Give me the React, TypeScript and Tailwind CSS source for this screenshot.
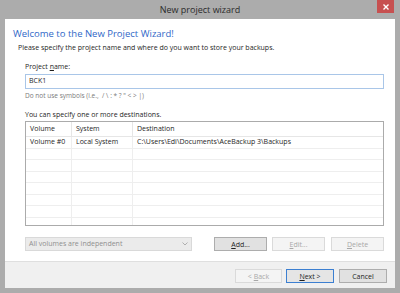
import React from "react";

const font = { fontFamily: '"Open Sans", "Noto Sans", sans-serif' };

function Btn({ label, u, rest, disabled, def }: { label?: string; u: string; rest: string; disabled?: boolean; def?: boolean }) {
  const base = "flex items-center justify-center h-[14px] text-[7px] leading-none border whitespace-pre";
  const cls = disabled
    ? "bg-[#f4f4f4] border-[#dadada] text-[#a8a8a8]"
    : def
    ? "bg-[#e5e5e5] border-[#3c7fd1] text-[#1e1e1e]"
    : "bg-[#e1e1e1] border-[#adadad] text-[#1e1e1e]";
  return (
    <div className={`${base} ${cls} w-full`}>
      <span>
        {label}
        <span className="underline">{u}</span>
        {rest}
      </span>
    </div>
  );
}

export default function App() {
  const rows = [
    ["Volume #0", "Local System", "C:\\Users\\Edi\\Documents\\AceBackup 3\\Backups"],
    ["", "", ""],
    ["", "", ""],
    ["", "", ""],
    ["", "", ""],
    ["", "", ""],
    ["", "", ""],
    ["", "", ""],
  ];
  return (
    <div className="w-[400px] h-[293px] bg-[#acacac] flex flex-col overflow-hidden" style={font}>
      <div className="relative h-[19px] flex items-center justify-center shrink-0">
        <span className="text-[9px] text-[#2b2b2b]">New project wizard</span>
        <div className="absolute right-[6px] top-0 w-[17px] h-[13px] bg-[#c75050] flex items-center justify-center">
          <svg width="6" height="6" viewBox="0 0 6 6">
            <path d="M0.5 0.5 L5.5 5.5 M5.5 0.5 L0.5 5.5" stroke="white" strokeWidth="1.4" />
          </svg>
        </div>
      </div>
      <div className="mx-[5px] flex-1 bg-white flex flex-col">
        <div className="flex-1 flex flex-col">
          <div className="mt-[8px] ml-[8px] h-[14px] leading-[14px] text-[9.5px] text-[#2f67c7]">
            Welcome to the New Project Wizard!
          </div>
          <div className="mt-[2px] ml-[13px] h-[10px] leading-[10px] text-[7px] text-[#1e1e1e]">
            Please specify the project name and where do you want to store your backups.
          </div>
          <div className="ml-[20px] mr-[11px] flex flex-col">
            <div className="mt-[9px] h-[10px] leading-[10px] text-[7px] text-[#1e1e1e]">
              Project <span className="underline">n</span>ame:
            </div>
            <div className="mt-[2px] h-[15px] border border-[#a9c6e8] flex items-center pl-[3px] text-[7px] text-[#1e1e1e]">
              BCK1
            </div>
            <div className="mt-[2px] h-[10px] leading-[10px] text-[6.5px] text-[#7a7a7a]">
              Do not use symbols (i.e., &nbsp;/ \ : * ? " &lt; &gt; |)
            </div>
            <div className="mt-[9px] h-[10px] leading-[10px] text-[7px] text-[#1e1e1e]">
              You can specify one or more destinations.
            </div>
            <div className="mt-[1px] h-[105px] border border-[#ababab] overflow-hidden flex flex-col text-[7px] text-[#1e1e1e]">
              <div className="h-[15px] shrink-0 flex border-b border-[#e6e6e6]">
                <div className="w-[46px] pl-[4px] flex items-center border-r border-[#e6e6e6]">Volume</div>
                <div className="w-[61px] pl-[4px] flex items-center border-r border-[#e6e6e6]">System</div>
                <div className="flex-1 pl-[4px] flex items-center">Destination</div>
              </div>
              {rows.map((r, i) => (
                <div key={i} className="h-[11.5px] shrink-0 flex border-b border-[#eeeeee]">
                  <div className="w-[46px] pl-[4px] flex items-center border-r border-[#eeeeee] whitespace-nowrap">{r[0]}</div>
                  <div className="w-[61px] pl-[4px] flex items-center border-r border-[#eeeeee] whitespace-nowrap">{r[1]}</div>
                  <div className="flex-1 pl-[4px] flex items-center whitespace-nowrap">{r[2]}</div>
                </div>
              ))}
            </div>
            <div className="mt-[11px] flex items-center">
              <div className="w-[167px] h-[14px] bg-[#ebebeb] border border-[#d9d9d9] flex items-center justify-between px-[3px] text-[7px] text-[#8f8f8f]">
                <span>All volumes are independent</span>
                <svg width="6" height="4" viewBox="0 0 6 4">
                  <path d="M0.5 0.5 L3 3 L5.5 0.5" stroke="#a8a8a8" strokeWidth="0.9" fill="none" />
                </svg>
              </div>
              <div className="ml-[22px] w-[53px]"><Btn u="A" rest="dd..." /></div>
              <div className="ml-[5px] w-[53px]"><Btn u="E" rest="dit..." disabled /></div>
              <div className="ml-[6px] w-[53px]"><Btn u="D" rest="elete" disabled /></div>
            </div>
          </div>
        </div>
        <div className="h-[27px] shrink-0 bg-[#f0f0f0] border-t border-[#dfdfdf] flex items-start pt-[7px] pl-[230px]">
          <div className="w-[47px]"><Btn label={"< "} u="B" rest="ack" disabled /></div>
          <div className="ml-[4px] w-[48px]"><Btn u="N" rest="ext >" def /></div>
          <div className="ml-[5px] w-[48px]"><Btn label="Cancel" u="" rest="" /></div>
        </div>
      </div>
      <div className="h-[5px] shrink-0" />
    </div>
  );
}
